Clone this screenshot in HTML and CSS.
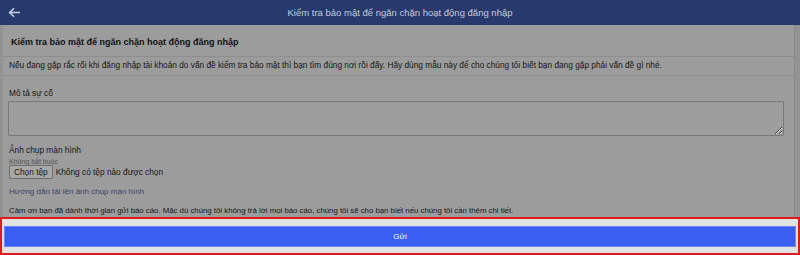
FILE: index.html
```html
<!DOCTYPE html>
<html lang="vi">
<head>
  <meta charset="UTF-8" />
  <meta name="viewport" content="width=device-width, initial-scale=1.0"/>
  <title>Kiểm tra bảo mật</title>
  <link rel="stylesheet" href="styles.css">
</head>
<body>
  <div class="topbar">
    <a class="back" href="#">
      <svg width="13" height="11" viewBox="0 0 13 11"><path d="M12 5.5H2M6 1.2L1.6 5.5 6 9.8" fill="none" stroke="#c9cfe2" stroke-width="1.6"/></svg>
    </a>
    <div class="topbar-title">Kiểm tra bảo mật để ngăn chặn hoạt động đăng nhập</div>
  </div>

  <div class="page">
    <div class="card">
      <h2 class="card-title">Kiểm tra bảo mật để ngăn chặn hoạt động đăng nhập</h2>
      <p class="intro">Nếu đang gặp rắc rối khi đăng nhập tài khoản do vấn đề kiểm tra bảo mật thì bạn tìm đúng nơi rồi đấy. Hãy dùng mẫu này để cho chúng tôi biết bạn đang gặp phải vấn đề gì nhé.</p>

      <div class="form">
        <label class="label">Mô tả sự cố</label>
        <textarea class="desc"></textarea>

        <label class="label shot">Ảnh chụp màn hình</label>
        <div class="hint">Không bắt buộc</div>
        <div class="file-row">
          <span class="file-btn">Chọn tệp</span>
          <span>Không có tệp nào được chọn</span>
        </div>

        <a class="guide" href="#">Hướng dẫn tải lên ảnh chụp màn hình</a>
        <p class="thanks">Cảm ơn bạn đã dành thời gian gửi báo cáo. Mặc dù chúng tôi không trả lời mọi báo cáo, chúng tôi sẽ cho bạn biết nếu chúng tôi cần thêm chi tiết.</p>
      </div>
    </div>
  </div>

  <div class="footer">
    <button class="send">Gửi</button>
  </div>
</body>
</html>
```

FILE: styles.css
```css
body {
  margin: 0;
  width: 800px;
  height: 255px;
  overflow: hidden;
  font-family: "Liberation Sans", Arial, sans-serif;
  background-color: #939393;
  color: #161616;
  display: flex;
  flex-direction: column;
}

.topbar {
  height: 25px;
  flex-shrink: 0;
  background-color: #283a6d;
  display: flex;
  align-items: center;
  position: relative;
}

.back {
  display: flex;
  margin-left: 8px;
}

.topbar-title {
  position: absolute;
  left: 0;
  right: 0;
  text-align: center;
  color: #c4cadd;
  font-size: 9.5px;
  pointer-events: none;
}

.page {
  flex: 1;
  padding: 0 5px 0 3px;
  overflow: hidden;
}

.card {
  background-color: #9c9c9c;
  height: 100%;
  border-right: 1px solid #8a8a8a;
}

.card-title {
  margin: 0;
  padding: 12px 8px 9px;
  font-size: 9px;
  font-weight: bold;
  color: #111;
  border-bottom: 1px solid #8e8e8e;
}

.intro {
  margin: 0;
  padding: 3px 6px 5px;
  font-size: 8.3px;
  border-bottom: 1px solid #8e8e8e;
}

.form {
  padding: 0 6px;
}

.label {
  display: block;
  font-size: 8.3px;
  margin-top: 12px;
}

.desc {
  display: block;
  box-sizing: border-box;
  width: 776px;
  height: 35px;
  margin: 3px 0 0 -1px;
  background-color: #9d9d9d;
  border: 1px solid #787878;
  border-radius: 1px;
  resize: vertical;
}

.label.shot {
  margin-top: 9px;
  margin-bottom: 3px;
}

.hint {
  font-size: 7px;
  color: #565656;
}

.file-row {
  display: flex;
  align-items: center;
  gap: 3px;
  font-size: 8.3px;
}

.file-row .file-btn {
  border: 1px solid #6e6e6e;
  border-radius: 2px;
  background-color: #a8a8a8;
  padding: 1px 4px;
}

.guide {
  display: block;
  margin-top: 8px;
  font-size: 8px;
  color: #3d4562;
  text-decoration: none;
}

.thanks {
  margin: 10px 0 0;
  font-size: 7.8px;
}

.footer {
  height: 38px;
  flex-shrink: 0;
  box-sizing: border-box;
  background-color: #e2e2e2;
  border: 2px solid #e01a1a;
  padding: 6px 2px 6px 2px;
  display: flex;
  align-items: center;
}

.send {
  width: 100%;
  height: 21px;
  background-color: #3a5ef0;
  border: 1px solid #6b86f3;
  color: #fff;
  font-family: "Liberation Sans", Arial, sans-serif;
  font-size: 8px;
  padding: 0;
}
```
